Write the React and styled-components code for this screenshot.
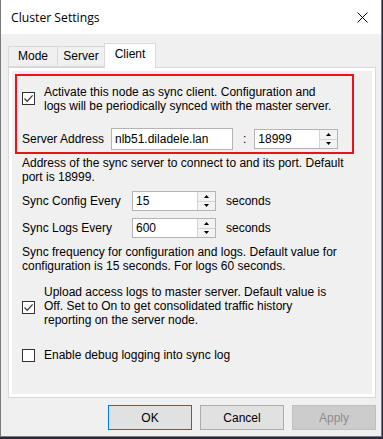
import React from "react";
import styled, { createGlobalStyle } from "styled-components";

const GlobalStyle = createGlobalStyle`
  html, body {
    margin: 0;
    padding: 0;
    background: #2a2a3c;
  }
  body {
    font-family: "Liberation Sans", Arial, sans-serif;
    font-size: 12px;
    color: #000;
  }
`;

const Window = styled.div`
  box-sizing: border-box;
  width: 382px;
  height: 437px;
  background: #f0f0f0;
  border-left: 1px solid #7a7a7a;
  border-right: 1px solid #7a7a7a;
  border-bottom: 1px solid #7a7a7a;
  display: flex;
  flex-direction: column;
`;

const TitleBar = styled.div`
  height: 34px;
  flex: none;
  background: #fff;
  display: flex;
  align-items: center;
  justify-content: space-between;
  padding: 0 13px 0 10px;
`;

const Title = styled.span`
  font-family: "Open Sans", "Noto Sans", sans-serif;
  font-size: 12.2px;
  color: #000;
  margin-top: 1px;
`;

const CloseIcon = styled.svg`
  width: 11px;
  height: 11px;
  display: block;
`;

const Body = styled.div`
  flex: 1;
  padding: 9px 5px 0 7px;
  display: flex;
  flex-direction: column;
`;

const TabStrip = styled.div`
  display: flex;
  align-items: flex-end;
  height: 24px;
  position: relative;
  z-index: 1;
`;

const Tab = styled.div`
  box-sizing: border-box;
  width: ${(p) => p.$w}px;
  height: ${(p) => (p.$active ? 25 : 21)}px;
  margin-bottom: ${(p) => (p.$active ? -1 : 0)}px;
  margin-left: -1px;
  &:first-child { margin-left: 0; }
  border: 1px solid #d9d9d9;
  border-bottom: ${(p) => (p.$active ? "none" : "1px solid #d9d9d9")};
  background: ${(p) => (p.$active ? "#fff" : "#f0f0f0")};
  display: flex;
  justify-content: center;
  padding-top: ${(p) => (p.$active ? 3 : 2)}px;
  font-size: 12px;
`;

const TabPanel = styled.div`
  box-sizing: border-box;
  height: 331px;
  border: 1px solid #d9d9d9;
  background: #fff;
  padding: 3px;
  display: flex;
`;

const Page = styled.div`
  flex: 1;
  background: #f0f0f0;
  padding: 3px 0 0 10px;
  display: flex;
  flex-direction: column;
`;

const Highlight = styled.div`
  box-sizing: border-box;
  width: 339px;
  height: 80px;
  margin-left: -7px;
  border: 2px solid #e8131b;
  padding: 9px 0 0 5px;
  display: flex;
  flex-direction: column;
`;

const CheckRow = styled.div`
  display: flex;
  align-items: center;
  gap: 9px;
  margin-top: ${(p) => p.$mt || 0}px;
`;

const Box = styled.span`
  box-sizing: border-box;
  flex: none;
  width: 13px;
  height: 13px;
  border: 1px solid #333;
  background: #fff;
  display: flex;
  align-items: center;
  justify-content: center;
  margin-top: ${(p) => p.$mt || 0}px;
`;

const Text = styled.div`
  line-height: 14px;
  white-space: nowrap;
  margin-top: ${(p) => p.$mt || 0}px;
`;

const FieldRow = styled.div`
  display: flex;
  align-items: center;
  margin-top: ${(p) => p.$mt || 0}px;
`;

const Label = styled.span`
  width: ${(p) => p.$w}px;
  flex: none;
`;

const Input = styled.div`
  box-sizing: border-box;
  width: ${(p) => p.$w}px;
  height: ${(p) => p.$h || 20}px;
  border: 1px solid #b4b4b4;
  background: #fff;
  padding-left: 3px;
  display: flex;
  align-items: center;
`;

const Colon = styled.span`
  margin: 0 8px 0 10px;
`;

const Spin = styled.div`
  box-sizing: border-box;
  width: ${(p) => p.$w}px;
  height: 20px;
  border: 1px solid #b4b4b4;
  background: #fff;
  display: flex;
  flex: none;
`;

const SpinValue = styled.span`
  flex: 1;
  padding-left: 3px;
  display: flex;
  align-items: center;
`;

const SpinButtons = styled.div`
  width: 17px;
  display: flex;
  flex-direction: column;
  border-left: 1px solid #d4d4d4;
`;

const SpinButton = styled.div`
  flex: 1;
  background: #f3f3f3;
  display: flex;
  align-items: center;
  justify-content: center;
  & + & { border-top: 1px solid #d4d4d4; }
`;

const Unit = styled.span`
  margin-left: 10px;
`;

const ButtonRow = styled.div`
  display: flex;
  justify-content: flex-end;
  gap: 8px;
  margin-top: 7px;
`;

const Button = styled.button`
  box-sizing: border-box;
  width: 84px;
  height: 25px;
  font-family: "Liberation Sans", Arial, sans-serif;
  font-size: 12px;
  padding: 0;
  background: ${(p) => (p.$disabled ? "#cccccc" : "#e1e1e1")};
  border: 1px solid ${(p) => (p.$default ? "#0078d7" : p.$disabled ? "#bfbfbf" : "#adadad")};
  color: ${(p) => (p.$disabled ? "#8d8d8d" : "#000")};
`;

function CheckBox({ checked, mt }) {
  return (
    <Box $mt={mt}>
      {checked && (
        <svg width="11" height="11" viewBox="0 0 11 11">
          <polyline points="1.5,5.5 4.2,8.3 9.6,2.4" fill="none" stroke="#333" strokeWidth="1.2" />
        </svg>
      )}
    </Box>
  );
}

function Spinner({ value, width }) {
  return (
    <Spin $w={width}>
      <SpinValue>{value}</SpinValue>
      <SpinButtons>
        <SpinButton>
          <svg width="5" height="3" viewBox="0 0 5 3">
            <polygon points="2.5,0 5,3 0,3" fill="#000" />
          </svg>
        </SpinButton>
        <SpinButton>
          <svg width="5" height="3" viewBox="0 0 5 3">
            <polygon points="0,0 5,0 2.5,3" fill="#000" />
          </svg>
        </SpinButton>
      </SpinButtons>
    </Spin>
  );
}

export default function App() {
  return (
    <>
      <GlobalStyle />
      <Window>
        <TitleBar>
          <Title>Cluster Settings</Title>
          <CloseIcon viewBox="0 0 11 11">
            <path d="M0.5 0.5 L10.5 10.5 M10.5 0.5 L0.5 10.5" stroke="#000" strokeWidth="1" />
          </CloseIcon>
        </TitleBar>
        <Body>
          <TabStrip>
            <Tab $w={50}>Mode</Tab>
            <Tab $w={48}>Server</Tab>
            <Tab $w={52} $active>Client</Tab>
          </TabStrip>
          <TabPanel>
            <Page>
              <Highlight>
                <CheckRow>
                  <CheckBox checked mt={-2} />
                  <Text>
                    Activate this node as sync client. Configuration and
                    <br />
                    logs will be periodically synced with the master server.
                  </Text>
                </CheckRow>
                <FieldRow $mt={15}>
                  <Label $w={89}>Server Address</Label>
                  <Input $w={122} $h={22}>nlb51.diladele.lan</Input>
                  <Colon>:</Colon>
                  <Spinner value="18999" width={84} />
                </FieldRow>
              </Highlight>
              <Text $mt={2}>
                Address of the sync server to connect to and its port. Default
                <br />
                port is 18999.
              </Text>
              <FieldRow $mt={7}>
                <Label $w={110}>Sync Config Every</Label>
                <Spinner value="15" width={84} />
                <Unit>seconds</Unit>
              </FieldRow>
              <FieldRow $mt={7}>
                <Label $w={110}>Sync Logs Every</Label>
                <Spinner value="600" width={84} />
                <Unit>seconds</Unit>
              </FieldRow>
              <Text $mt={7}>
                Sync frequency for configuration and logs. Default value for
                <br />
                configuration is 15 seconds. For logs 60 seconds.
              </Text>
              <CheckRow $mt={12}>
                <CheckBox checked mt={2} />
                <Text>
                  Upload access logs to master server. Default value is
                  <br />
                  Off. Set to On to get consolidated traffic history
                  <br />
                  reporting on the server node.
                </Text>
              </CheckRow>
              <CheckRow $mt={21}>
                <CheckBox />
                <Text>Enable debug logging into sync log</Text>
              </CheckRow>
            </Page>
          </TabPanel>
          <ButtonRow>
            <Button $default>OK</Button>
            <Button>Cancel</Button>
            <Button $disabled>Apply</Button>
          </ButtonRow>
        </Body>
      </Window>
    </>
  );
}
